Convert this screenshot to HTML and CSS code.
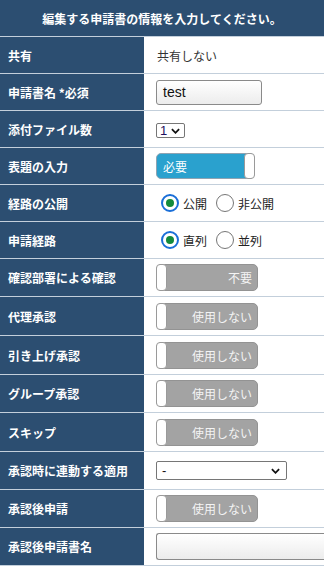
FILE: index.html
```html
<!DOCTYPE html>
<html lang="ja">
<head>
<meta charset="utf-8">
<link rel="stylesheet" href="styles.css">
</head>
<body>
<div class="form">
  <div class="head">編集する申請書の情報を入力してください。</div>

  <div class="row h36"><div class="label">共有</div><div class="value"><span class="text">共有しない</span></div></div>
  <div class="row h36"><div class="label">申請書名 *必須</div><div class="value"><div class="input small">test</div></div></div>
  <div class="row h36"><div class="label">添付ファイル数</div><div class="value"><div class="select tiny"><span class="num">1</span><svg class="chev" viewBox="0 0 10 6" width="9" height="6"><path d="M1 1 L5 5 L9 1" fill="none" stroke="#111" stroke-width="2"/></svg></div></div></div>
  <div class="row h36"><div class="label">表題の入力</div><div class="value"><div class="toggle on"><span class="ttext">必要</span><span class="knob"></span></div></div></div>
  <div class="row h36"><div class="label">経路の公開</div><div class="value"><span class="radio checked"></span><span class="rlabel">公開</span><span class="radio"></span><span class="rlabel">非公開</span></div></div>
  <div class="row h36"><div class="label">申請経路</div><div class="value"><span class="radio checked"></span><span class="rlabel">直列</span><span class="radio"></span><span class="rlabel">並列</span></div></div>
  <div class="row h37"><div class="label">確認部署による確認</div><div class="value"><div class="toggle off"><span class="knob"></span><span class="ttext">不要</span></div></div></div>
  <div class="row h38"><div class="label">代理承認</div><div class="value"><div class="toggle off"><span class="knob"></span><span class="ttext">使用しない</span></div></div></div>
  <div class="row h38"><div class="label">引き上げ承認</div><div class="value"><div class="toggle off"><span class="knob"></span><span class="ttext">使用しない</span></div></div></div>
  <div class="row h37"><div class="label">グループ承認</div><div class="value"><div class="toggle off"><span class="knob"></span><span class="ttext">使用しない</span></div></div></div>
  <div class="row h38"><div class="label">スキップ</div><div class="value"><div class="toggle off"><span class="knob"></span><span class="ttext">使用しない</span></div></div></div>
  <div class="row h37"><div class="label">承認時に連動する適用</div><div class="value"><div class="select wide"><span class="dash">-</span><svg class="chev" viewBox="0 0 10 6" width="9" height="6"><path d="M1 1 L5 5 L9 1" fill="none" stroke="#111" stroke-width="2"/></svg></div></div></div>
  <div class="row h37"><div class="label">承認後申請</div><div class="value"><div class="toggle off"><span class="knob"></span><span class="ttext">使用しない</span></div></div></div>
  <div class="row h37"><div class="label">承認後申請書名</div><div class="value"><div class="input full"></div></div></div>
</div>
</body>
</html>
```

FILE: styles.css
```css
html, body {
  margin: 0;
  padding: 0;
  background: #fff;
  overflow: hidden;
}
body {
  font-family: "Noto Sans CJK JP", "Noto Sans", sans-serif;
  font-size: 12px;
  color: #333;
}
.form {
  width: 324px;
  overflow: hidden;
}
.head {
  height: 36px;
  background: #2c4e71;
  color: #fff;
  font-weight: bold;
  font-size: 12px;
  display: flex;
  align-items: center;
  justify-content: center;
  border-bottom: 1px solid #c3cfdb;
}
.row {
  display: flex;
  border-bottom: 1px solid #c3cfdb;
}
.h36 { height: 36px; }
.h37 { height: 37px; }
.h38 { height: 38px; }
.label {
  width: 136px;
  flex: none;
  background: #2c4e71;
  color: #fff;
  font-weight: bold;
  font-size: 12px;
  padding-left: 8px;
  display: flex;
  align-items: center;
  white-space: nowrap;
}
.value {
  flex: 1;
  padding-left: 12px;
  display: flex;
  align-items: center;
  min-width: 0;
  white-space: nowrap;
}
.text {
  padding-left: 1px;
  color: #333;
}
.input {
  box-sizing: border-box;
  border: 1px solid #8a8a8a;
  border-radius: 3px;
  background: linear-gradient(#ffffff, #ececec);
  font-family: "Liberation Sans", Arial, sans-serif;
  font-size: 14px;
  color: #111;
  display: flex;
  align-items: center;
  padding-left: 6px;
}
.input.small {
  width: 106px;
  height: 25px;
}
.input.full {
  width: 168px;
  height: 27px;
  flex: none;
  border-right: none;
  border-radius: 3px 0 0 3px;
}
.select {
  box-sizing: border-box;
  border: 1px solid #767676;
  border-radius: 2px;
  background: #fff;
  display: flex;
  align-items: center;
  font-family: "Liberation Sans", Arial, sans-serif;
}
.select.tiny {
  width: 29px;
  height: 15px;
  margin-top: 3px;
  padding-left: 3px;
  font-size: 13px;
}
.select.tiny .num {
  color: #1e1060;
}
.select.tiny .chev {
  margin-left: 4px;
}
.select.wide {
  width: 131px;
  height: 19px;
  padding-left: 5px;
  font-size: 13px;
  color: #111;
}
.select.wide .chev {
  margin-left: auto;
  margin-right: 6px;
}
.toggle {
  box-sizing: border-box;
  border-radius: 5px;
  display: flex;
  align-items: stretch;
  color: #fff;
  font-size: 12px;
}
.toggle.on {
  width: 99px;
  height: 26px;
  background: #2aa1ce;
  border: 1px solid #8ea3b2;
}
.toggle.off {
  width: 102px;
  height: 27px;
  background: #a3a3a3;
  border: 1px solid #939393;
}
.ttext {
  display: flex;
  align-items: center;
}
.toggle.on .ttext {
  padding-left: 6px;
}
.toggle.off .ttext {
  margin-left: auto;
  padding-right: 5px;
  color: #f4f4f4;
}
.knob {
  width: 9px;
  background: #fff;
  border: 1px solid #9a9a9a;
  border-radius: 4px;
  margin: -1px;
}
.toggle.on .knob {
  margin-left: auto;
}
.radio {
  box-sizing: border-box;
  width: 18px;
  height: 18px;
  border-radius: 50%;
  border: 1px solid #767676;
  background: #fff;
  flex: none;
  margin-left: 5px;
  position: relative;
}
.radio.checked {
  border: 2px solid #1a6fd8;
}
.radio.checked::after {
  content: "";
  position: absolute;
  left: 3px;
  top: 3px;
  width: 8px;
  height: 8px;
  border-radius: 50%;
  background: #138a3c;
}
.rlabel {
  margin-left: 4px;
  color: #222;
}
.rlabel + .radio {
  margin-left: 9px;
}
```
